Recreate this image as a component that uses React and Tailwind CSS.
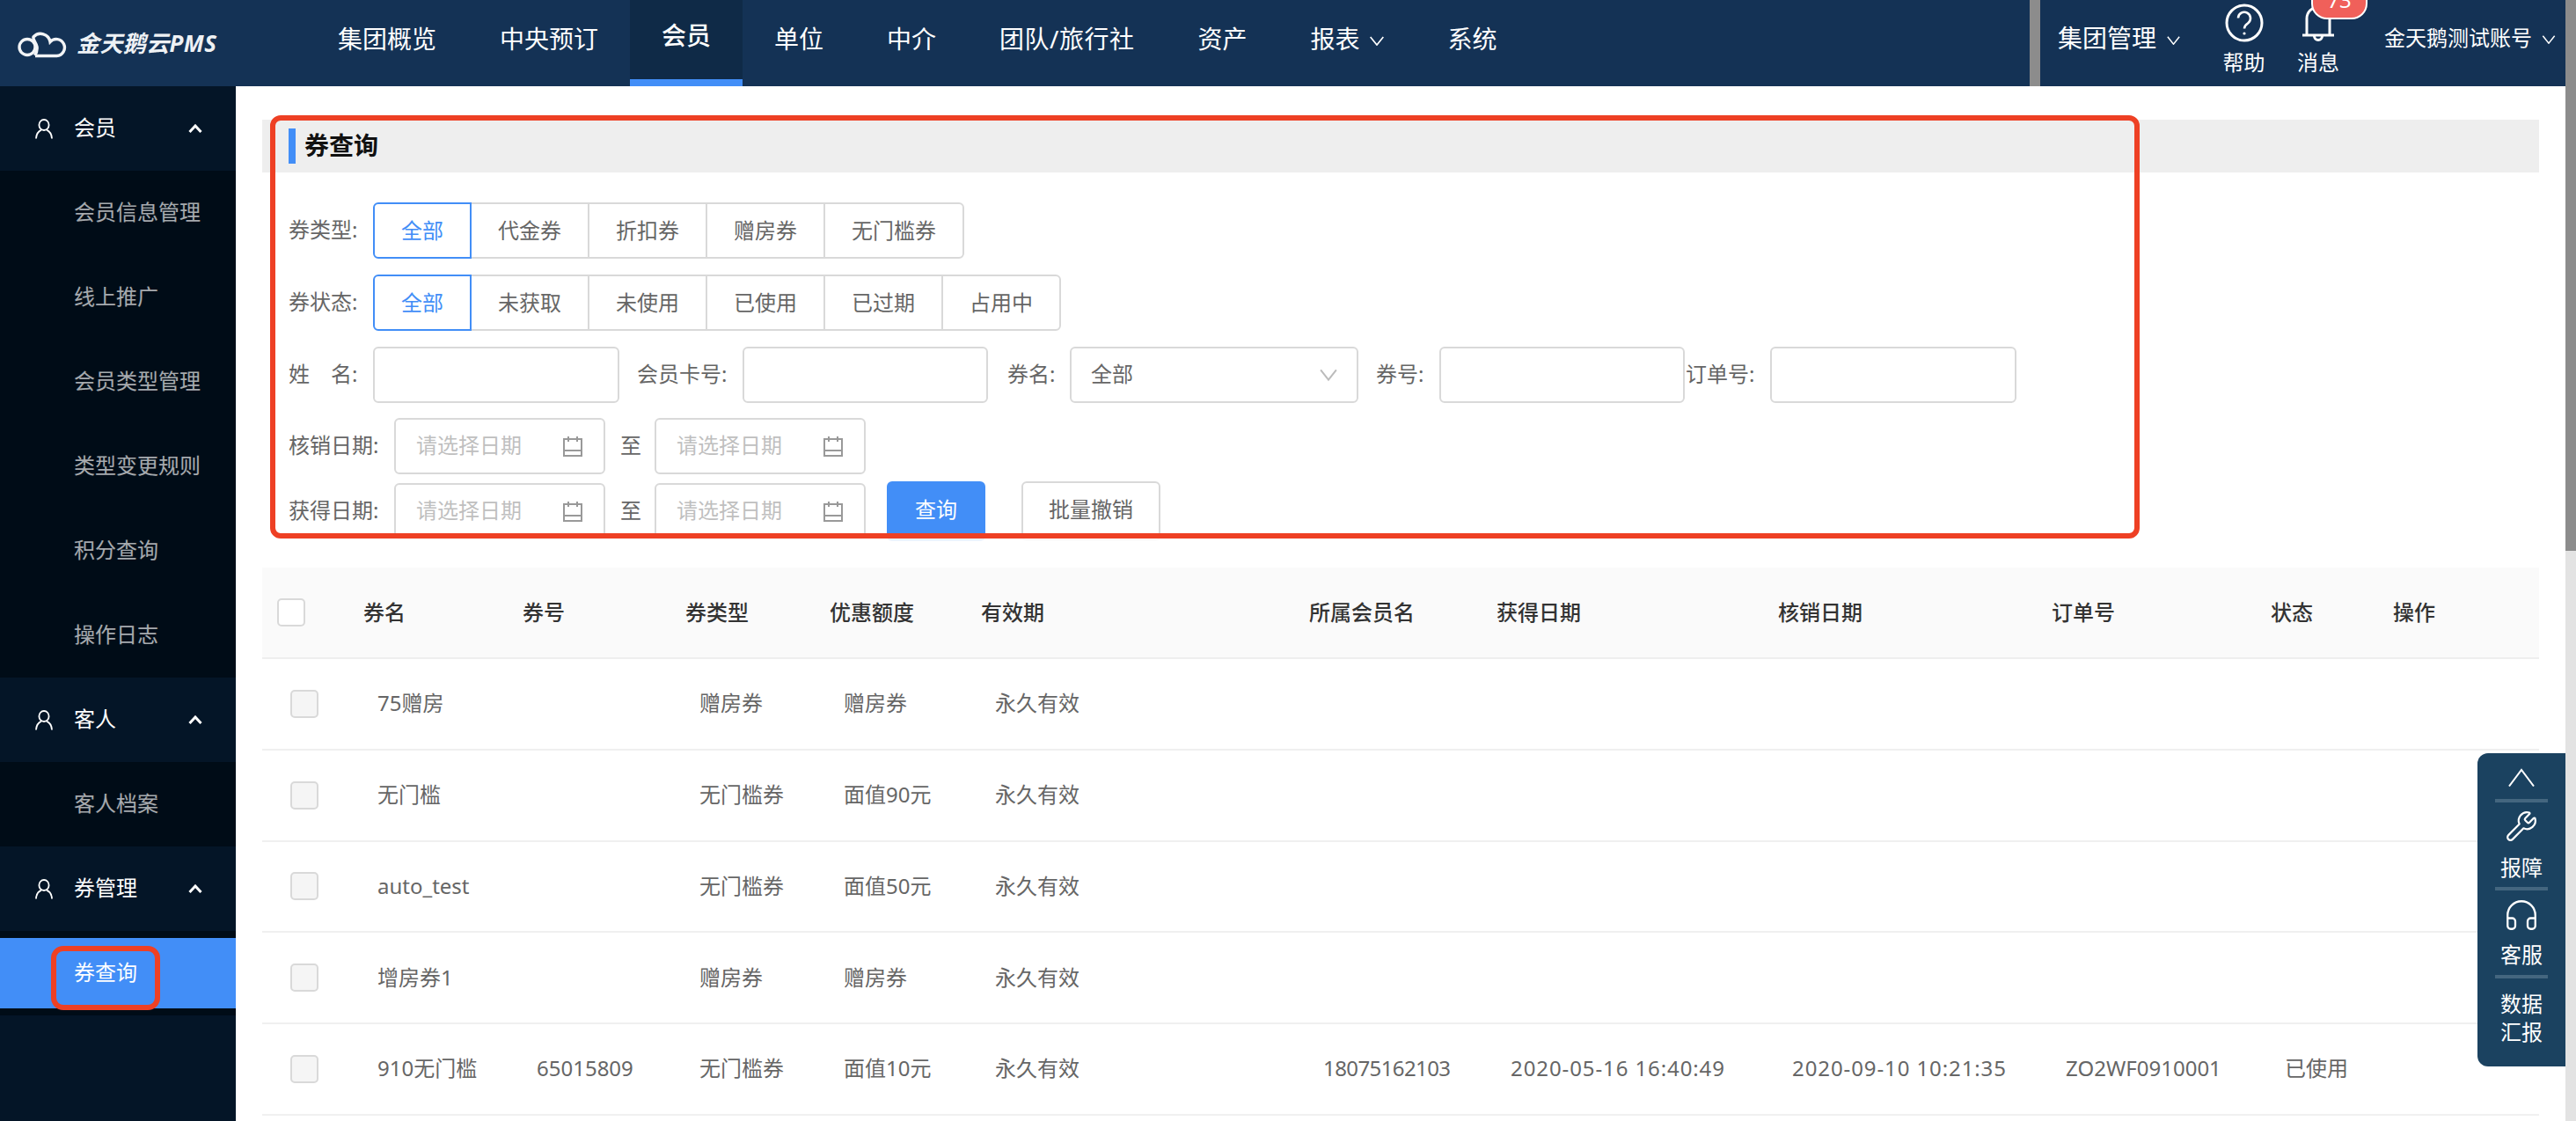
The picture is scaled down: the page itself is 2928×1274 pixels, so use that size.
import React from "react";
import { Wrench, Headphones } from "lucide-react";

const Thin = ({ className = "", color = "#fff" }) => (
  <svg className={className} viewBox="0 0 18 12" fill="none" stroke={color} strokeWidth="1.8">
    <path d="M1 1l8 10 8-10" />
  </svg>
);

const UserIcon = () => (
  <svg className="w-[20px] h-[23px] shrink-0" viewBox="0 0 20 23" fill="none" stroke="#fff" strokeWidth="1.8">
    <ellipse cx="10" cy="7" rx="5.6" ry="6" />
    <path d="M1 22.5c.3-5.5 3-8.6 6-9.9M19 22.5c-.3-5.5-3-8.6-6-9.9" />
  </svg>
);

const Up = () => (
  <svg className="w-[16px] h-[10px]" viewBox="0 0 16 10" fill="none" stroke="#fff" strokeWidth="3">
    <path d="M1.5 9L8 2l6.5 7" />
  </svg>
);

const Cal = () => (
  <svg className="w-[24px] h-[24px] shrink-0" viewBox="0 0 24 24" fill="none" stroke="#999" strokeWidth="2">
    <path d="M2 4h20v19H2zM2 17h20M7 1v6M17 1v6" />
  </svg>
);

function Group({ title }) {
  return (
    <div className="h-[96px] bg-[#041527] flex items-center pl-[40px] pr-[38px] text-white">
      <UserIcon />
      <span className="ml-[24px] flex-1 leading-none pb-[3px]">{title}</span>
      <Up />
    </div>
  );
}

function Sub({ children }) {
  return <div className="h-[96px] flex items-center pl-[84px] pb-[3px] text-white/65">{children}</div>;
}

function Seg({ items }) {
  return (
    <div className="flex">
      {items.map((t, i) => (
        <div
          key={t}
          className={
            i === 0
              ? "relative z-10 h-[64px] flex items-center border-2 border-[#428ef7] rounded-l-[6px] px-[30px] text-[#428ef7]"
              : "h-[64px] flex items-center border-2 border-[#d9d9d9] -ml-[2px] px-[30px] last:rounded-r-[6px]"
          }
        >
          {t}
        </div>
      ))}
    </div>
  );
}

const Input = ({ className = "" }) => <div className={"h-[64px] border-2 border-[#d9d9d9] rounded-[6px] " + className} />;

const DateBox = () => (
  <div className="w-[240px] h-[64px] border-2 border-[#d9d9d9] rounded-[6px] flex items-center justify-between pl-[23px] pr-[23px] text-[#bfbfbf]">
    <span className="pb-[2px]">请选择日期</span>
    <Cal />
  </div>
);

const cols =
  "grid grid-cols-[115px_181px_185px_164px_172px_373px_213px_320px_311px_249px_139px_1fr] items-center";

const heads = ["券名", "券号", "券类型", "优惠额度", "有效期", "所属会员名", "获得日期", "核销日期", "订单号", "状态", "操作"];
const rows = [
  ["75赠房", "", "赠房券", "赠房券", "永久有效"],
  ["无门槛", "", "无门槛券", "面值90元", "永久有效"],
  ["auto_test", "", "无门槛券", "面值50元", "永久有效"],
  ["增房券1", "", "赠房券", "赠房券", "永久有效"],
  ["910无门槛", "65015809", "无门槛券", "面值10元", "永久有效", "18075162103", "2020-05-16 16:40:49", "2020-09-10 10:21:35", "ZO2WF0910001", "已使用"],
];

const nav = ["集团概览", "中央预订", "会员", "单位", "中介", "团队/旅行社", "资产", "报表", "系统"];

export default function App() {
  return (
    <div className="w-[2928px] h-[1274px] overflow-hidden flex relative bg-white text-[24px] text-[#666] font-['Noto_Sans','Noto_Sans_CJK_SC',sans-serif]">
      <div className="w-[2916px] flex flex-col">
        {/* header */}
        <header className="h-[98px] shrink-0 bg-[#143255] flex text-white">
          <div className="w-[348px] flex items-center pl-[20px]">
            <svg className="w-[56px] h-[34px] shrink-0" viewBox="0 0 56 34" fill="none" stroke="#f2f4f6" strokeWidth="3.4">
              <circle cx="11" cy="21.5" r="9" />
              <path d="M20 31.5H44.5A9.5 9.5 0 1 0 37 15.5 11 11 0 0 0 18 10C17 13 21 16 22 21 22.6 25 21.5 28 19.5 31" />
            </svg>
            <span className="ml-[11px] text-[26px] font-bold italic whitespace-nowrap leading-none text-[#eef1f4] tracking-[0.4px]">金天鹅云PMS</span>
          </div>
          <nav className="flex flex-1 text-[28px]">
            {nav.map((t) => (
              <div
                key={t}
                className={
                  t === "会员"
                    ? "h-[98px] px-[36px] pb-[11px] flex items-center bg-[#0f2a47] border-b-[8px] border-[#428ef7] whitespace-nowrap font-medium"
                    : t === "团队/旅行社"
                    ? "h-[98px] pl-[36px] pr-[36px] pb-[11px] flex items-center whitespace-nowrap tracking-[0.5px]"
                    : "h-[98px] px-[36px] pb-[11px] flex items-center whitespace-nowrap"
                }
              >
                {t}
                {t === "报表" && <Thin className="w-[18px] h-[11px] ml-[10px] mt-[6px]" />}
              </div>
            ))}
          </nav>
          <div className="w-[12px] h-[98px] bg-[#8c8c8c]" />
          <div className="w-[597px] flex items-start">
            <div className="ml-[20px] h-[86px] flex items-center text-[28px] whitespace-nowrap">
              集团管理
              <Thin className="w-[17px] h-[10px] ml-[11px] mt-[6px]" />
            </div>
            <div className="ml-[48px] w-[47px] flex flex-col items-center relative">
              <svg className="w-[44px] h-[44px] mt-[4px]" viewBox="0 0 44 44" fill="none" stroke="#fff" strokeWidth="3">
                <circle cx="22" cy="22" r="20" />
                <path d="M15 16.5a7 7 0 1 1 11 6c-2.600 1.800-4 3-4 6" strokeWidth="2.6" />
                <circle cx="22" cy="34" r="1.6" fill="#fff" stroke="none" />
              </svg>
              <span className="mt-[3px] leading-[44px] whitespace-nowrap h-[44px] -translate-y-[2px]">帮助</span>
            </div>
            <div className="ml-[38px] w-[46px] flex flex-col items-center relative">
              <svg className="w-[36px] h-[41px] mt-[7px]" viewBox="0 0 36 41" fill="none" stroke="#fff" strokeWidth="3">
                <path d="M5 32V14a13 13 0 0 1 26 0v18M0 33h36" />
                <path d="M13.500 34a4.500 4.500 0 0 0 9 0" />
              </svg>
              <span className="leading-[44px] whitespace-nowrap h-[44px] mt-[3px] -translate-y-[2px]">消息</span>
              <div className="absolute left-[15px] top-[-22px] w-[64px] h-[44px] rounded-[18px] bg-[#f0605a] border-2 border-white text-white flex items-center justify-center leading-none">
                73
              </div>
            </div>
            <div className="ml-[52px] h-[86px] flex items-center whitespace-nowrap">
              金天鹅测试账号
              <Thin className="w-[16px] h-[10px] ml-[11px] mt-[4px]" />
            </div>
          </div>
        </header>

        <div className="flex flex-1 min-h-0">
          {/* sidebar */}
          <aside className="w-[268px] shrink-0 bg-[#041527]">
            <Group title="会员" />
            <div className="bg-[#000c17]">
              {["会员信息管理", "线上推广", "会员类型管理", "类型变更规则", "积分查询", "操作日志"].map((t) => (
                <Sub key={t}>{t}</Sub>
              ))}
            </div>
            <Group title="客人" />
            <div className="bg-[#000c17]">
              <Sub>客人档案</Sub>
            </div>
            <Group title="券管理" />
            <div className="bg-[#000c17] py-[8px]">
              <div className="h-[80px] bg-[#428ef7] text-white flex items-center pl-[84px] pb-[3px] relative">
                券查询
                <div className="absolute left-[58px] top-[9px] w-[124px] h-[73px] border-[6px] border-[#ee4024] rounded-[14px]" />
              </div>
            </div>
          </aside>

          {/* main */}
          <main className="flex-1 relative px-[30px] pt-[38px]">
            <div className="h-[60px] bg-[#eeeeee] flex items-center pl-[30px]">
              <div className="w-[8px] h-[40px] bg-[#428ef7]" />
              <span className="ml-[10px] text-[28px] font-bold text-[#111] leading-none pb-[2px]">券查询</span>
            </div>

            <div className="pl-[30px] mt-[34px] flex flex-col">
              <div className="flex items-center">
                <span className="w-[96px] pb-[3px]">券类型:</span>
                <Seg items={["全部", "代金券", "折扣券", "赠房券", "无门槛券"]} />
              </div>
              <div className="flex items-center mt-[18px]">
                <span className="w-[96px] pb-[3px]">券状态:</span>
                <Seg items={["全部", "未获取", "未使用", "已使用", "已过期", "占用中"]} />
              </div>
              <div className="flex items-center mt-[18px] whitespace-nowrap">
                <span className="w-[96px] pb-[3px]">姓　名:</span>
                <Input className="w-[280px]" />
                <span className="ml-[20px] w-[120px] pb-[3px]">会员卡号:</span>
                <Input className="w-[279px]" />
                <span className="ml-[22px] w-[71px] pb-[3px]">券名:</span>
                <div className="w-[328px] h-[64px] border-2 border-[#d9d9d9] rounded-[6px] flex items-center justify-between pl-[22px] pr-[22px]">
                  <span className="pb-[3px]">全部</span>
                  <Thin className="w-[20px] h-[16px]" color="#bbb" />
                </div>
                <span className="ml-[20px] w-[72px] pb-[3px]">券号:</span>
                <Input className="w-[279px]" />
                <span className="ml-[1px] w-[96px] pb-[3px]">订单号:</span>
                <Input className="w-[280px]" />
              </div>
              <div className="flex items-center mt-[17px] whitespace-nowrap">
                <span className="w-[120px] pb-[3px]">核销日期:</span>
                <DateBox />
                <span className="ml-[17px] w-[24px] pb-[3px]">至</span>
                <span className="ml-[15px]">
                  <DateBox />
                </span>
              </div>
              <div className="flex items-center mt-[8px] whitespace-nowrap">
                <span className="w-[120px] pb-[3px]">获得日期:</span>
                <DateBox />
                <span className="ml-[17px] w-[24px] pb-[3px]">至</span>
                <span className="ml-[15px]">
                  <DateBox />
                </span>
                <div className="ml-[24px] w-[112px] h-[68px] rounded-[6px] bg-[#428ef7] text-white flex items-center justify-center pb-[5px]">查询</div>
                <div className="ml-[41px] w-[158px] h-[68px] rounded-[6px] border-2 border-[#d9d9d9] flex items-center justify-center pb-[5px]">批量撤销</div>
              </div>
            </div>

            {/* table */}
            <div className="mt-[30px]">
              <div className={cols + " h-[104px] bg-[#fafafa] border-b-2 border-[#eeeeee] text-[#333] font-medium"}>
                <div className="pl-[17px]">
                  <div className="w-[32px] h-[32px] bg-white border-2 border-[#d9d9d9] rounded-[5px]" />
                </div>
                {heads.map((h) => (
                  <div key={h} className="pb-[1px] whitespace-nowrap">{h}</div>
                ))}
              </div>
              {rows.map((r) => (
                <div key={r[0]} className={cols + " h-[103.75px] border-b-2 border-[#f0f0f0]"}>
                  <div className="pl-[32px]">
                    <div className="w-[32px] h-[32px] bg-[#f5f5f5] border-2 border-[#d9d9d9] rounded-[5px]" />
                  </div>
                  {heads.map((h, i) => (
                    <div
                      key={h}
                      className={
                        i === 5
                          ? "pl-[16px] pb-[1px] whitespace-nowrap tracking-[-0.6px]"
                          : i === 6 || i === 7
                          ? "pl-[16px] pb-[1px] whitespace-nowrap tracking-[0.9px]"
                          : "pl-[16px] pb-[1px] whitespace-nowrap"
                      }
                    >
                      {r[i] || ""}
                    </div>
                  ))}
                </div>
              ))}
            </div>

            {/* annotation */}
            <div className="absolute left-[39px] top-[33px] w-[2125px] h-[481px] border-[6px] border-[#ee4024] rounded-[12px]" />
            <div className="absolute left-[42px] top-[514px] w-[2125px] h-[8px] bg-white/90" />
          </main>
        </div>
      </div>

      {/* scrollbar */}
      <div className="w-[12px] bg-[#e3e3e3]">
        <div className="h-[626px] bg-[#8c8c8c]" />
      </div>

      {/* floating tools */}
      <div className="absolute right-[12px] top-[856px] w-[100px] h-[356px] bg-[#1b4260] rounded-l-[12px] flex flex-col items-center text-white">
        <div className="h-[52px] flex items-center justify-center pt-[2px]">
          <svg className="w-[30px] h-[21px]" viewBox="0 0 30 21" fill="none" stroke="#fff" strokeWidth="2">
            <path d="M1 20.500L15 2l14 18.500" />
          </svg>
        </div>
        <div className="w-[60px] h-[4px] shrink-0 bg-[#44667f]" />
        <div className="h-[96px] flex flex-col items-center pt-[8px]">
          <Wrench size={38} strokeWidth={1.4} className="shrink-0" />
          <span className="leading-[44px] mt-[6px]">报障</span>
        </div>
        <div className="w-[60px] h-[4px] shrink-0 bg-[#44667f]" />
        <div className="h-[96px] flex flex-col items-center pt-[7px]">
          <Headphones size={42} strokeWidth={1.3} className="shrink-0" />
          <span className="leading-[44px] mt-[2px]">客服</span>
        </div>
        <div className="w-[60px] h-[4px] shrink-0 bg-[#44667f]" />
        <div className="mt-[13px] text-center leading-[32px] w-[50px]">数据<br />汇报</div>
      </div>
    </div>
  );
}
